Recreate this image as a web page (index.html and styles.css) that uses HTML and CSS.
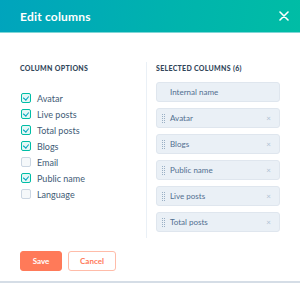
FILE: index.html
```html
<!DOCTYPE html>
<html lang="en">
<head>
    <meta charset="UTF-8">
    <meta name="viewport" content="width=device-width, initial-scale=1.0">
    <title>Edit columns</title>
    <link rel="stylesheet" href="styles.css">
</head>
<body>
    <div class="modal">
        <div class="modal-header">
            <h1 class="modal-title">Edit columns</h1>
            <button class="close-button" aria-label="Close">
                <svg width="10" height="10" viewBox="0 0 10 10">
                    <path d="M1 1 L9 9 M9 1 L1 9" stroke="#fff" stroke-width="1.6" stroke-linecap="round"/>
                </svg>
            </button>
        </div>

        <div class="modal-body">
            <div class="options-column">
                <h2 class="section-label">Column options</h2>
                <ul class="option-list">
                    <li class="option checked"><span class="checkbox"></span>Avatar</li>
                    <li class="option checked"><span class="checkbox"></span>Live posts</li>
                    <li class="option checked"><span class="checkbox"></span>Total posts</li>
                    <li class="option checked"><span class="checkbox"></span>Blogs</li>
                    <li class="option"><span class="checkbox"></span>Email</li>
                    <li class="option checked"><span class="checkbox"></span>Public name</li>
                    <li class="option"><span class="checkbox"></span>Language</li>
                </ul>
            </div>

            <div class="selected-column">
                <h2 class="section-label">Selected columns (6)</h2>
                <ul class="selected-list">
                    <li class="selected-item locked">Internal name</li>
                    <li class="selected-item"><span class="handle"></span>Avatar<span class="remove">&times;</span></li>
                    <li class="selected-item"><span class="handle"></span>Blogs<span class="remove">&times;</span></li>
                    <li class="selected-item"><span class="handle"></span>Public name<span class="remove">&times;</span></li>
                    <li class="selected-item"><span class="handle"></span>Live posts<span class="remove">&times;</span></li>
                    <li class="selected-item"><span class="handle"></span>Total posts<span class="remove">&times;</span></li>
                </ul>
            </div>
        </div>

        <div class="modal-footer">
            <button class="save-button">Save</button>
            <button class="cancel-button">Cancel</button>
        </div>
    </div>
</body>
</html>
```

FILE: styles.css
```css
body {
    margin: 0;
    font-family: 'Lato', 'Noto Sans', sans-serif;
    color: #33475b;
    background-color: #fff;
}
.modal {
    height: 281px;
    border-bottom: 2px solid #d5dde6;
    display: flex;
    flex-direction: column;
}
.modal-header {
    height: 32px;
    border-bottom: 1px solid #7fd6d6;
    background: linear-gradient(100deg, #00a4bd 0%, #00b4ad 60%, #00bda5 100%);
    display: flex;
    align-items: center;
    justify-content: space-between;
    padding: 0 11px 0 20px;
}
.modal-title {
    margin: 0;
    color: #fff;
    font-size: 12px;
    font-weight: 700;
    letter-spacing: 0.2px;
}
.close-button {
    background: none;
    border: none;
    padding: 0;
    width: 10px;
    height: 10px;
    display: flex;
    cursor: pointer;
}
.modal-body {
    display: flex;
    padding: 29px 20px 0 20px;
}
.options-column {
    width: 126px;
    border-right: 1px solid #eaf0f6;
}
.selected-column {
    flex: 1;
    padding: 0 0 6px 9px;
}
.section-label {
    margin: 0;
    height: 12px;
    line-height: 12px;
    font-size: 7px;
    font-weight: 900;
    text-transform: uppercase;
    letter-spacing: 0.3px;
}
.option-list {
    list-style: none;
    margin: 16px 0 0 0;
    padding: 0 0 0 1px;
}
.option {
    height: 16px;
    display: flex;
    align-items: center;
    font-size: 9px;
    color: #425b76;
}
.checkbox {
    width: 8px;
    height: 8px;
    border: 1px solid #cbd6e2;
    background-color: #f5f8fa;
    border-radius: 2px;
    margin-right: 6px;
    position: relative;
}
.option.checked .checkbox {
    border-color: #00bda5;
    background-color: #e5f8f6;
}
.option.checked .checkbox::after {
    content: "";
    position: absolute;
    left: 2px;
    top: 1px;
    width: 3px;
    height: 4px;
    border-right: 1.4px solid #00a4bd;
    border-bottom: 1.4px solid #00a4bd;
    transform: rotate(40deg);
}
.selected-list {
    list-style: none;
    margin: 8px 0 0 0;
    padding: 0;
    display: flex;
    flex-direction: column;
    gap: 6px;
}
.selected-item {
    height: 18px;
    border: 1px solid #dfe6ee;
    border-radius: 3px;
    background-color: #eaf0f6;
    display: flex;
    align-items: center;
    padding: 0 8px 0 5px;
    font-size: 8px;
    color: #516f90;
}
.selected-item.locked {
    padding-left: 13px;
}
.handle {
    width: 1px;
    height: 9px;
    border-left: 1px dotted #99afc4;
    border-right: 1px dotted #99afc4;
    margin-right: 5px;
}
.remove {
    margin-left: auto;
    color: #b0c1d4;
    font-size: 8px;
}
.modal-footer {
    display: flex;
    gap: 6px;
    padding: 13px 20px 0 20px;
}
.save-button, .cancel-button {
    height: 20px;
    border-radius: 3px;
    font-family: inherit;
    font-size: 8px;
    font-weight: 700;
    padding: 0;
    cursor: pointer;
}
.save-button {
    width: 42px;
    background-color: #ff7a59;
    border: 1px solid #ff7a59;
    color: #fff;
}
.cancel-button {
    width: 48px;
    background-color: #fff;
    border: 1px solid #ffbca9;
    color: #ff7a59;
}
```
